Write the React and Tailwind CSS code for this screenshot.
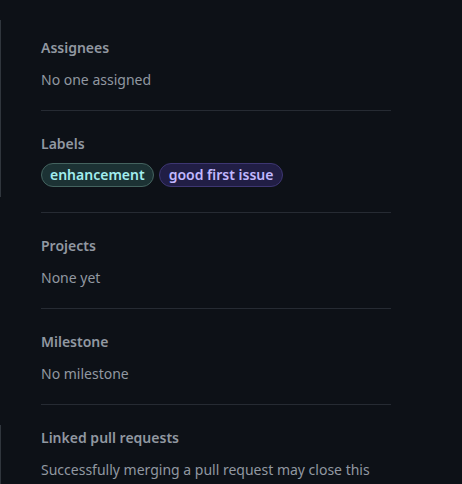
import React from "react";

const font = { fontFamily: '"Noto Sans", "Segoe UI", sans-serif' };

const Section = ({ title, children, last = false, gap = "mt-[10px]" }) => (
  <div className={`pt-[22px] pb-[19px] ${last ? "" : "border-b border-[#262b33]"}`}>
    <h3 className="text-[14px] leading-[22px] font-semibold text-[#9198a1]">{title}</h3>
    <div className={`${gap} text-[14px] leading-[22px] text-[#9198a1]`}>{children}</div>
  </div>
);

const Label = ({ name, tone }) => (
  <span
    className={
      tone === "teal"
        ? "inline-flex items-center h-[24px] px-[8px] rounded-full border border-[#44635f] bg-[#1c3234] text-[#a2eeef] text-[14px] font-semibold"
        : "inline-flex items-center h-[24px] px-[9px] rounded-full border border-[#3d3672] bg-[#211e45] text-[#c2b8ff] text-[14px] font-semibold"
    }
  >
    {name}
  </span>
);

export default function App() {
  return (
    <div className="flex min-h-[484px] bg-[#0d1117]" style={font}>
      <div className="flex flex-col w-[1px]">
        <div className="mt-[20px] h-[177px] bg-[#30363d]" />
        <div className="mt-[228px] flex-1 bg-[#30363d]" />
      </div>
      <div className="ml-[40px] w-[350px] pt-[15px]">
        <Section title="Assignees">No one assigned</Section>
        <Section title="Labels" gap="mt-[8px]">
          <div className="flex gap-[5px] pb-[6px]">
            <Label name="enhancement" tone="teal" />
            <Label name="good first issue" tone="purple" />
          </div>
        </Section>
        <Section title="Projects">None yet</Section>
        <Section title="Milestone">No milestone</Section>
        <Section title="Linked pull requests" last>
          Successfully merging a pull request may close this
        </Section>
      </div>
    </div>
  );
}
